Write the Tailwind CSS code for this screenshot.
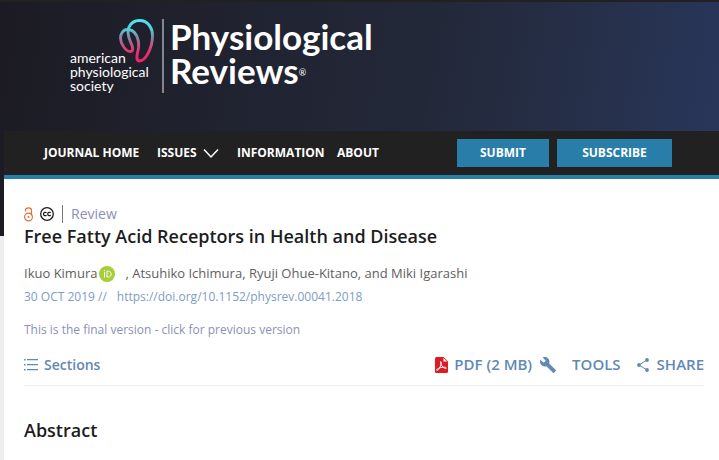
<!DOCTYPE html>
<html lang="en">

<head>
    <meta charset="UTF-8">
    <meta name="viewport" content="width=device-width, initial-scale=1.0">
    <title>Free Fatty Acid Receptors in Health and Disease | Physiological Reviews</title>
    <script src="https://cdn.jsdelivr.net/npm/@tailwindcss/browser@4"></script>
</head>

<body class="bg-[#eeeeee] font-['Open_Sans',sans-serif] text-[#1d1d1d]">
    <div class="min-h-screen flex flex-col border-t-2 border-[#212121] bg-[linear-gradient(100deg,#1c1b23_0%,#1f212d_25%,#232839_58%,#26304a_80%,#29375d_100%)] bg-[length:100%_234px] bg-no-repeat">
        <!-- Header -->
        <header class="h-[129px] flex items-start pl-[70px] pt-[17px]">
            <a href="#" class="relative w-[94px] h-[74px] border-r-2 border-[#85868d] text-white" aria-label="American Physiological Society">
                <svg class="absolute left-[49px] top-0 w-9 h-11" viewBox="0 0 36 44" fill="none">
                    <defs>
                        <linearGradient id="apsMark" x1="0" y1="1" x2="0" y2="43" gradientUnits="userSpaceOnUse">
                            <stop offset="0" stop-color="#4fe6f0" />
                            <stop offset="0.22" stop-color="#58cbd8" />
                            <stop offset="0.4" stop-color="#8089a6" />
                            <stop offset="0.62" stop-color="#c84e80" />
                            <stop offset="0.8" stop-color="#ed2b6b" />
                            <stop offset="1" stop-color="#f0226a" />
                        </linearGradient>
                    </defs>
                    <path d="M11 32.500C15.500 32.500 13.500 27 11.500 23C9 17 8 12 10 8C12 4 16 1.500 20.500 1.500C29 1.500 33.500 9 33.500 17C33.500 28 27 42 20.500 42C16 42 18.500 34 19.500 29C20.500 19 16 10.500 8.500 10.500C4 10.500 1.500 15 1.500 19C1.500 25 7 32.500 11 32.500Z" stroke="url(#apsMark)" stroke-width="2.900" stroke-linejoin="round" />
                </svg>
                <span class="block pt-8 text-sm leading-[14px] font-['Lato',sans-serif]">american<br>physiological<br>society</span>
            </a>
            <h2 class="pl-[6px] font-['Lato',sans-serif] font-bold text-[35px] leading-[34px] text-white">
                Physiological<br>Reviews<span class="align-[8px] text-[9px] leading-none font-normal">®</span>
            </h2>
        </header>

        <div class="ml-1 flex-grow bg-white">
            <!-- Navigation -->
            <nav class="h-12 flex items-center bg-[#212121] border-b-4 border-[#287da9] pl-10 text-xs font-bold text-white">
                <a href="#" class="w-[113px]">JOURNAL HOME</a>
                <a href="#" class="w-20 flex items-center gap-[6px]">ISSUES
                    <svg class="w-4 h-4" viewBox="0 0 16 16" fill="none" stroke="currentColor" stroke-width="1.500"><path d="M1 4.500L8 12L15 4.500" /></svg>
                </a>
                <a href="#" class="w-[100px]">INFORMATION</a>
                <a href="#" class="w-[120px]">ABOUT</a>
                <a href="#" class="w-[92px] h-7 mr-2 flex items-center justify-center bg-[#287da9]">SUBMIT</a>
                <a href="#" class="w-[115px] h-7 flex items-center justify-center bg-[#287da9]">SUBSCRIBE</a>
            </nav>

            <main class="pl-5 pr-[15px] pt-[25px]">
                <!-- Article type -->
                <div class="h-5 flex items-center">
                    <svg class="w-[9px] h-[15px] mr-[7px]" viewBox="0 0 9 15" fill="none" stroke="#e0713a" stroke-width="1.200">
                        <circle cx="4.500" cy="10" r="3.900" />
                        <path d="M1.500 4.500V3.500C1.500 1.800 2.800 0.800 4.500 0.800S7.500 1.800 7.500 3.500V8" />
                        <circle cx="4.500" cy="10" r="1" fill="#e0713a" stroke="none" />
                    </svg>
                    <svg class="w-[14px] h-[14px] mr-2" viewBox="0 0 14 14" fill="none" stroke="#1d1d1d">
                        <circle cx="7" cy="7" r="6.300" stroke-width="1.300" />
                        <path d="M6.500 5.800C5.700 4.900 3.500 5.200 3.500 7S5.700 9.100 6.500 8.200M10.700 5.800C9.900 4.900 7.700 5.200 7.700 7S9.900 9.100 10.700 8.200" stroke-width="1.300" />
                    </svg>
                    <span class="border-l border-[#777777] h-[18px] pl-2 leading-[18px] text-sm text-[#8c8fba]">Review</span>
                </div>
                <h1 class="text-lg leading-6 font-semibold">Free Fatty Acid Receptors in Health and Disease</h1>

                <!-- Authors -->
                <div class="mt-[14px] h-6 flex items-center text-[13px] text-[#606060]">
                    <a href="#">Ikuo Kimura</a>
                    <a href="#" class="ml-[2px] mr-[10px]" aria-label="ORCID">
                        <svg class="w-4 h-4" viewBox="0 0 16 16"><circle cx="8" cy="8" r="8" fill="#a6ce39" /><path d="M5.500 6.200V11.500M8 5.200V11H9.300C13 11 13 5.200 9.300 5.200Z" fill="none" stroke="#fff" /><circle cx="5.500" cy="4.500" r="0.700" fill="#fff" /></svg>
                    </a>
                    <span>, <a href="#">Atsuhiko Ichimura</a>, <a href="#">Ryuji Ohue-Kitano</a>, and <a href="#">Miki Igarashi</a></span>
                </div>
                <div class="h-[22px] flex items-center text-xs text-[#7d9cc6]">
                    <span class="mr-[10px]">30 OCT 2019 //</span>
                    <a href="#">https://doi.org/10.1152/physrev.00041.2018</a>
                </div>
                <a href="#" class="block mt-3 leading-5 text-xs text-[#8c8fba]">This is the final version - click for previous version</a>

                <!-- Toolbar -->
                <div class="mt-1 h-[42px] flex items-center border-b border-[#eeeeee] text-[15px] font-semibold text-[#6288b6]">
                    <button type="button" class="flex items-center gap-[6px] mr-auto text-sm">
                        <svg class="w-[14px] h-3" viewBox="0 0 14 12" fill="currentColor"><path d="M0 0H1.500V1.500H0ZM3 0H14V1.300H3ZM0 5H1.500V6.500H0ZM3 5H14V6.300H3ZM0 10H1.500V11.500H0ZM3 10H14V11.300H3Z" /></svg>
                        Sections
                    </button>
                    <a href="#" class="flex items-center gap-[6px] mr-2">
                        <svg class="w-[13px] h-4" viewBox="0 0 13 16"><path d="M1.500 0H8.500L13 4.500V14.500Q13 16 11.500 16H1.500Q0 16 0 14.500V1.500Q0 0 1.500 0Z" fill="#e01b24" /><path d="M8.500 1V4.500H12Z" fill="#fff" /><path d="M5.800 4.500C7.200 5 6 8.500 4.500 11C3.500 12.800 1.800 14 1.600 13C1.500 12 5 10.500 8 10.200C10 10 11.700 10.500 11.200 11.300C10.500 12.200 8 10.500 6.800 8.700C5.700 7 5 4.500 5.800 4.500Z" fill="none" stroke="#fff" /></svg>
                        PDF (2 MB)
                    </a>
                    <button type="button" class="flex items-center gap-4 mr-4">
                        <svg class="w-4 h-4" viewBox="1 1 22 22" fill="currentColor"><path d="M22.700 19l-9.100-9.100c.9-2.300.4-5-1.500-6.900-2-2-5-2.400-7.400-1.300L9 6 6 9 1.600 4.700C.4 7.100.9 10.100 2.900 12.100c1.900 1.900 4.600 2.400 6.900 1.500l9.100 9.100c.4.4 1 .4 1.400 0l2.300-2.300c.5-.4.5-1.100.1-1.400z" /></svg>
                        TOOLS
                    </button>
                    <button type="button" class="flex items-center gap-2">
                        <svg class="w-3 h-[14px]" viewBox="0 0 12 14" fill="currentColor"><circle cx="10" cy="2" r="1.900" /><circle cx="2" cy="7" r="1.900" /><circle cx="10" cy="12" r="1.900" /><path d="M10 2L2 7L10 12" fill="none" stroke="currentColor" /></svg>
                        SHARE
                    </button>
                </div>

                <h2 class="mt-[30px] mb-4 text-lg leading-7 font-semibold">Abstract</h2>
            </main>
        </div>
    </div>
</body>

</html>
